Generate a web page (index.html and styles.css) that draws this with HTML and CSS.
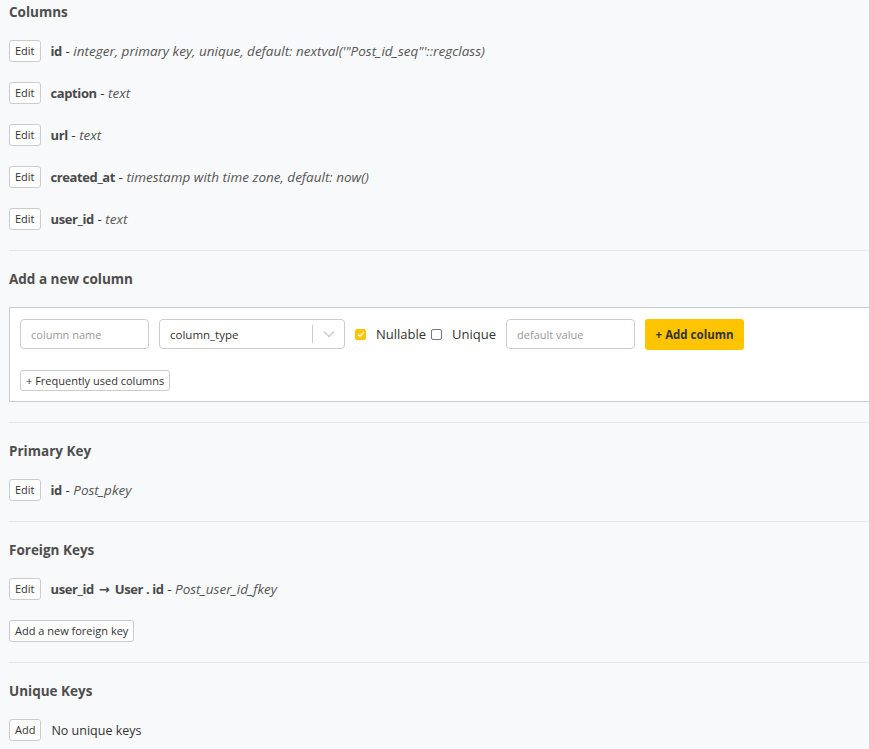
FILE: index.html
```html
<!DOCTYPE html>
<html>
<head>
<meta charset="utf-8">
<link rel="stylesheet" href="styles.css">
</head>
<body>
<div class="page">
  <section class="section">
    <h4 class="heading">Columns</h4>
    <div class="row"><button class="btn">Edit</button><span class="txt"><b>id</b> - <i>integer, primary key, unique, default: nextval('"Post_id_seq"'::regclass)</i></span></div>
    <div class="row"><button class="btn">Edit</button><span class="txt"><b>caption</b> - <i>text</i></span></div>
    <div class="row"><button class="btn">Edit</button><span class="txt"><b>url</b> - <i>text</i></span></div>
    <div class="row"><button class="btn">Edit</button><span class="txt"><b>created_at</b> - <i>timestamp with time zone, default: now()</i></span></div>
    <div class="row last"><button class="btn">Edit</button><span class="txt"><b>user_id</b> - <i>text</i></span></div>
  </section>
  <section class="section">
    <h4 class="heading">Add a new column</h4>
    <div class="box">
      <div class="form-row">
        <input class="input name" placeholder="column name">
        <div class="select">
          <span class="select-val">column_type</span>
          <span class="select-sep"></span>
          <svg class="chev" width="12" height="8" viewBox="0 0 12 8"><path d="M1 1.5 L6 6.5 L11 1.5" fill="none" stroke="#ccc" stroke-width="1.5"/></svg>
        </div>
        <span class="check on"><svg width="8" height="7" viewBox="0 0 8 7"><path d="M1 3.5 L3 5.5 L7 1" fill="none" stroke="#fff" stroke-width="1.2"/></svg></span>
        <span class="lbl">Nullable</span>
        <span class="check"></span>
        <span class="lbl uq">Unique</span>
        <input class="input def" placeholder="default value">
        <button class="add-btn">+ Add column</button>
      </div>
      <button class="btn freq">+ Frequently used columns</button>
    </div>
  </section>
  <section class="section">
    <h4 class="heading">Primary Key</h4>
    <div class="row last"><button class="btn">Edit</button><span class="txt"><b>id</b> - <i>Post_pkey</i></span></div>
  </section>
  <section class="section">
    <h4 class="heading">Foreign Keys</h4>
    <div class="row"><button class="btn">Edit</button><span class="txt"><b>user_id <span class="arrow">→</span> User . id</b> - <i>Post_user_id_fkey</i></span></div>
    <div class="row last"><button class="btn">Add a new foreign key</button></div>
  </section>
  <section class="section nolines">
    <h4 class="heading">Unique Keys</h4>
    <div class="row last"><button class="btn">Add</button><span class="txt plain">No unique keys</span></div>
  </section>
</div>
</body>
</html>
```

FILE: styles.css
```css
html, body {
  margin: 0;
  padding: 0;
  background: #f8f9fa;
  overflow: hidden;
}
body {
  font-family: "Open Sans", "Noto Sans", sans-serif;
  color: #4a4a4a;
  font-size: 13px;
}
.page {
  padding: 2px 0 0 9px;
  width: 900px;
}
.section {
  border-bottom: 1px solid #e6e7e8;
  padding-bottom: 20px;
  margin-bottom: 18px;
}
.nolines { border-bottom: none; }
.heading {
  margin: 0 0 18px 0;
  font-size: 13.5px;
  line-height: 20px;
  font-weight: 700;
  color: #4d4d4d;
}
.row {
  display: flex;
  align-items: center;
  height: 22px;
  margin-bottom: 20px;
}
.row.last { margin-bottom: 0; }
.btn {
  font-family: inherit;
  font-size: 11px;
  color: #333;
  background: #fff;
  border: 1px solid #ccc;
  border-radius: 3px;
  height: 22px;
  padding: 0 5px;
  line-height: 20px;
  margin: 0;
}
.txt {
  margin-left: 10px;
  font-size: 13.5px;
  color: #333;
}
.txt.plain {
  font-size: 12.5px;
}
.txt b {
  font-weight: 700;
  color: #4a4a4a;
  font-size: 13px;
  letter-spacing: -0.4px;
}
.txt i { color: #555; }
.arrow {
  font-family: "DejaVu Sans", sans-serif;
  font-weight: 700;
  font-size: 13px;
  letter-spacing: 0;
  margin: 0 2px;
}
.box {
  background: #fff;
  border: 1px solid #ccc;
  padding: 11px 10px 10px 10px;
}
.form-row {
  display: flex;
  align-items: center;
  height: 30px;
}
.input {
  font-family: inherit;
  font-size: 11px;
  height: 30px;
  box-sizing: border-box;
  border: 1px solid #ccc;
  border-radius: 4px;
  padding: 0 10px;
  background: #fff;
  margin: 0;
}
.input::placeholder { color: #999; }
.name { width: 129px; }
.select {
  margin-left: 10px;
  width: 186px;
  height: 30px;
  box-sizing: border-box;
  border: 1px solid #ccc;
  border-radius: 4px;
  display: flex;
  align-items: center;
  padding-left: 10px;
  font-size: 11.5px;
  color: #333;
}
.select-val { flex: 1; }
.select-sep {
  width: 1px;
  height: 18px;
  background: #ccc;
}
.chev { margin: 0 9px 0 10px; }
.check {
  width: 11px;
  height: 11px;
  box-sizing: border-box;
  border: 1px solid #777;
  border-radius: 2px;
  display: inline-flex;
  align-items: center;
  justify-content: center;
  margin-left: 5px;
}
.check.on {
  margin-left: 10px;
  background: #ffc400;
  border-color: #ffc400;
}
.lbl {
  font-size: 13px;
  color: #333;
  margin-left: 10px;
  margin-right: 0;
}
.lbl.uq { margin-left: 10px; }
.def { width: 129px; margin-left: 10px; }
.add-btn {
  margin-left: 10px;
  height: 31px;
  width: 99px;
  background: #ffc400;
  border: none;
  border-radius: 3px;
  font-family: inherit;
  font-size: 11.5px;
  font-weight: 700;
  color: #333;
}
.freq {
  margin-top: 21px;
  height: 21px;
}
```
